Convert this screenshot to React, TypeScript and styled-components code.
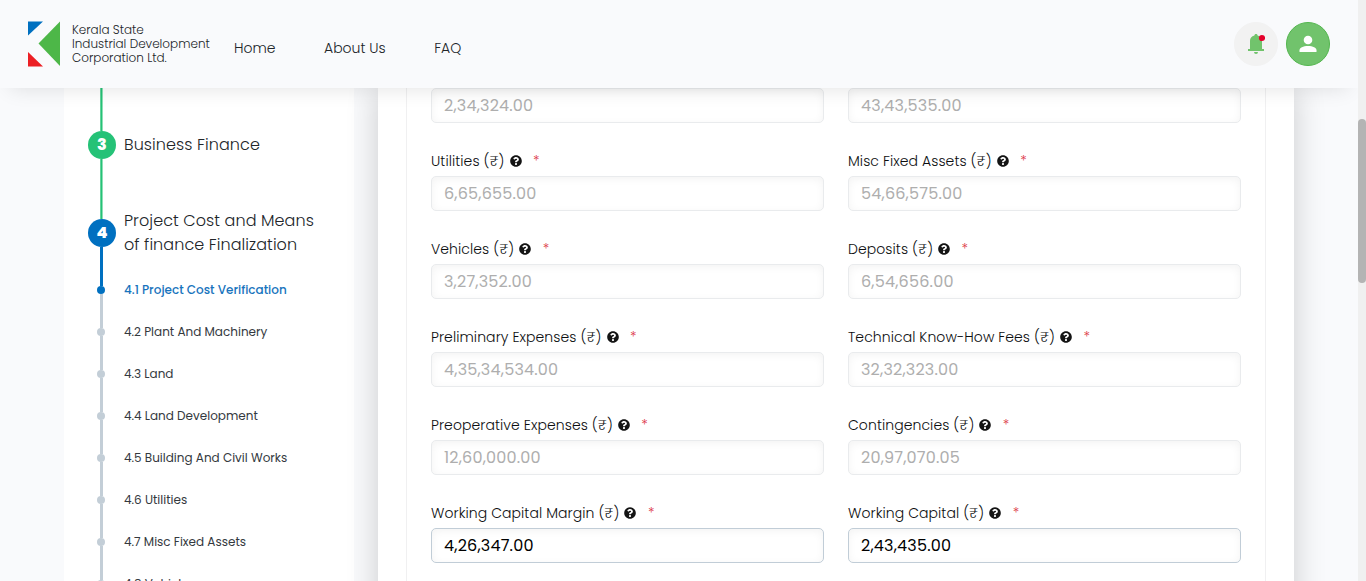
import React from "react";
import styled, { createGlobalStyle } from "styled-components";
import { FaQuestionCircle } from "react-icons/fa";

const Global = createGlobalStyle`
  * { box-sizing: border-box; }
  body {
    margin: 0;
    overflow: hidden;
    background: #f9fafc;
    color: #212529;
    font-family: Poppins, Inter, "Noto Sans", sans-serif;
  }
`;

const Screen = styled.div`
  display: flex;
  height: 581px;
  overflow: hidden;
`;

const Page = styled.div`
  flex: 1;
  min-width: 0;
  display: flex;
  flex-direction: column;
`;

const ScrollTrack = styled.div`
  width: 8px;
  padding-top: 119px;
  background: #f0f0f0;
  position: relative;
  z-index: 3;
`;

const ScrollThumb = styled.div`
  height: 164px;
  border-radius: 4px;
  background: #b4b4b4;
`;

const Header = styled.header`
  position: relative;
  z-index: 2;
  flex: none;
  height: 88px;
  padding: 0 28px;
  display: flex;
  align-items: center;
  background: #f9fafc;
  box-shadow: 0 10px 20px -10px rgba(0, 0, 0, 0.12);
`;

const BrandText = styled.div`
  width: 138px;
  margin-left: 12px;
  font-size: 12px;
  line-height: 14px;
  font-weight: 300;
`;

const Text = styled.span`
  display: block;
  white-space: nowrap;
`;

const Nav = styled.nav`
  display: flex;
  flex: 1;
  gap: 48.5px;
  margin: 8px 0 0 24px;
  font-size: 14px;
  font-weight: 300;
  line-height: 21px;
`;

const Actions = styled.div`
  display: flex;
  gap: 8px;
`;

const RoundButton = styled.div<{ $primary?: boolean }>`
  width: 44px;
  height: 44px;
  border-radius: 50%;
  display: flex;
  align-items: center;
  justify-content: center;
  background: ${(p) => (p.$primary ? "#71c36c" : "#f2f2f2")};
  border: 1px solid ${(p) => (p.$primary ? "#53b64e" : "#f2f2f2")};
`;

const Body = styled.div`
  flex: 1;
  min-height: 0;
  display: flex;
  gap: 24px;
  padding: 0 64px;
`;

const Sidebar = styled.aside`
  width: 290px;
  padding-left: 24px;
  background: #fff;
`;

const Step = styled.div<{ $height: number }>`
  display: flex;
  gap: 8px;
  height: ${(p) => p.$height}px;
`;

const Marker = styled.div`
  width: 28px;
  flex: none;
  display: flex;
  flex-direction: column;
  align-items: center;
`;

const Rail = styled.div<{ $color: string; $height?: number; $done?: boolean }>`
  width: 3px;
  margin-right: 2px;
  flex: ${(p) => (p.$height ? `0 0 ${p.$height}px` : "1")};
  background: ${(p) => p.$color};
  ${(p) => p.$done && "border: solid #8fe0b6; border-width: 0 1px 0 0; border-left: 1px solid #66d39d;"}
`;

const StepCircle = styled.div<{ $color: string }>`
  flex: none;
  width: 28px;
  height: 28px;
  border-radius: 50%;
  background: ${(p) => p.$color};
  color: #fff;
  font-size: 16px;
  font-weight: 800;
  line-height: 28px;
  text-align: center;
`;

const Dot = styled.div<{ $color: string }>`
  flex: none;
  width: 8px;
  height: 8px;
  margin-right: 2px;
  border-radius: 50%;
  background: ${(p) => p.$color};
`;

const StepTitle = styled.div<{ $top: number }>`
  padding-top: ${(p) => p.$top}px;
  font-size: 16px;
  line-height: 24px;
  font-weight: 300;
  letter-spacing: 0.08px;
`;

const SubTitle = styled.div<{ $active?: boolean }>`
  align-self: center;
  font-size: 12px;
  font-weight: ${(p) => (p.$active ? 500 : 400)};
  color: ${(p) => (p.$active ? "#1874bd" : "#34393e")};
`;

const Main = styled.main`
  flex: 1;
  min-width: 0;
  margin-bottom: -60px;
  padding: 0 28px;
  background: #fff;
  box-shadow: 0 0 30px rgba(0, 0, 0, 0.19);
`;

const FieldGrid = styled.section`
  height: 100%;
  padding: 0 24px;
  border: solid #f0f0f1;
  border-width: 0 1px;
  display: grid;
  grid-template-columns: 1fr 1fr;
  grid-template-rows: 35px;
  grid-auto-rows: 88px;
  align-content: start;
  column-gap: 24px;
`;

const Field = styled.div`
  display: flex;
  flex-direction: column;
  justify-content: flex-end;
`;

const Label = styled.div`
  display: flex;
  align-items: center;
  height: 21px;
  margin-bottom: 4px;
  font-size: 14px;
  font-weight: 300;
  letter-spacing: 0.08px;
  color: #0c0e10;
  svg { margin: 0 0 1px 5px; }
`;

const Required = styled.span`
  margin-left: 11.5px;
  color: #dc3545;
`;

const Input = styled.div<{ $enabled?: boolean }>`
  height: 35px;
  padding: 0 12px;
  border: 1px solid ${(p) => (p.$enabled ? "#c1cdd7" : "#e9ebed")};
  border-radius: 5px;
  box-shadow: inset 0 2px 8px rgba(0, 0, 0, 0.05);
  font-size: 16px;
  line-height: 33px;
  letter-spacing: 0.2px;
  color: ${(p) => (p.$enabled ? "#000" : "#aeaeae")};
`;

const GREY = "#c3ced7";
const BLUE = "#0070c0";
const GREEN = "#25c277";

const substeps = [
  "4.1 Project Cost Verification",
  "4.2 Plant And Machinery",
  "4.3 Land",
  "4.4 Land Development",
  "4.5 Building And Civil Works",
  "4.6 Utilities",
  "4.7 Misc Fixed Assets",
  "4.8 Vehicles",
];

interface FieldData {
  label?: string;
  value: string;
  enabled?: boolean;
}

const fields: FieldData[] = [
  { value: "2,34,324.00" },
  { value: "43,43,535.00" },
  { label: "Utilities (₹)", value: "6,65,655.00" },
  { label: "Misc Fixed Assets (₹)", value: "54,66,575.00" },
  { label: "Vehicles (₹)", value: "3,27,352.00" },
  { label: "Deposits (₹)", value: "6,54,656.00" },
  { label: "Preliminary Expenses (₹)", value: "4,35,34,534.00" },
  { label: "Technical Know-How Fees (₹)", value: "32,32,323.00" },
  { label: "Preoperative Expenses (₹)", value: "12,60,000.00" },
  { label: "Contingencies (₹)", value: "20,97,070.05" },
  { label: "Working Capital Margin (₹)", value: "4,26,347.00", enabled: true },
  { label: "Working Capital (₹)", value: "2,43,435.00", enabled: true },
];

const Logo = () => (
  <svg width="32" height="46" viewBox="0 0 32 46">
    <path d="M0 0.5H15L0 14.5Z" fill="#0070c0" />
    <path d="M32 0.5V45L10.5 22.5Z" fill="#4db748" />
    <path d="M0 31V45.5H15Z" fill="#ec1f24" />
  </svg>
);

const Bell = () => (
  <svg width="18" height="22" viewBox="0 0 18 22">
    <path
      d="M9 1C8 1 7.400 1.700 7.400 2.600C4.500 3.300 3 5.300 3 8V16H1V18H17V16H15V8C15 5.300 13.500 3.300 10.600 2.600C10.600 1.700 10 1 9 1ZM7 19A2 2 0 0 0 11 19Z"
      fill="#71c36c"
    />
    <circle cx="15" cy="5" r="3.100" fill="#e4002b" />
  </svg>
);

const Person = () => (
  <svg width="18" height="18" viewBox="0 0 18 18">
    <circle cx="9" cy="5" r="4.300" fill="#fff" />
    <path d="M0.500 17V15.200C0.500 12.500 4.200 10.900 9 10.900S17.500 12.500 17.500 15.200V17Z" fill="#fff" />
  </svg>
);

function FormField({ label, value, enabled }: FieldData) {
  return (
    <Field>
      {label && (
        <Label>
          <Text>{label}</Text>
          <FaQuestionCircle size={12} color="#141414" />
          <Required>*</Required>
        </Label>
      )}
      <Input $enabled={enabled}>
        <Text>{value}</Text>
      </Input>
    </Field>
  );
}

export default function App() {
  return (
    <>
      <Global />
      <Screen>
        <Page>
          <Header>
            <Logo />
            <BrandText>
              <Text>Kerala State</Text>
              <Text>Industrial Development</Text>
              <Text>Corporation Ltd.</Text>
            </BrandText>
            <Nav>
              <Text>Home</Text>
              <Text>About Us</Text>
              <Text>FAQ</Text>
            </Nav>
            <Actions>
              <RoundButton><Bell /></RoundButton>
              <RoundButton $primary><Person /></RoundButton>
            </Actions>
          </Header>
          <Body>
            <Sidebar>
              <Step $height={120}>
                <Marker>
                  <Rail $color={GREEN} $height={43} $done />
                  <StepCircle $color={GREEN}>3</StepCircle>
                  <Rail $color={GREEN} $done />
                </Marker>
                <StepTitle $top={45}><Text>Business Finance</Text></StepTitle>
              </Step>
              <Step $height={61}>
                <Marker>
                  <Rail $color={GREEN} $height={11} $done />
                  <StepCircle $color={BLUE}>4</StepCircle>
                  <Rail $color={BLUE} />
                </Marker>
                <StepTitle $top={1}>
                  <Text>Project Cost and Means</Text>
                  <Text>of finance Finalization</Text>
                </StepTitle>
              </Step>
              {substeps.map((name, i) => (
                <Step key={name} $height={42}>
                  <Marker>
                    <Rail $color={i === 0 ? BLUE : GREY} />
                    <Dot $color={i === 0 ? BLUE : GREY} />
                    <Rail $color={GREY} />
                  </Marker>
                  <SubTitle $active={i === 0}><Text>{name}</Text></SubTitle>
                </Step>
              ))}
            </Sidebar>
            <Main>
              <FieldGrid>
                {fields.map((f) => <FormField key={f.value} {...f} />)}
              </FieldGrid>
            </Main>
          </Body>
        </Page>
        <ScrollTrack><ScrollThumb /></ScrollTrack>
      </Screen>
    </>
  );
}
